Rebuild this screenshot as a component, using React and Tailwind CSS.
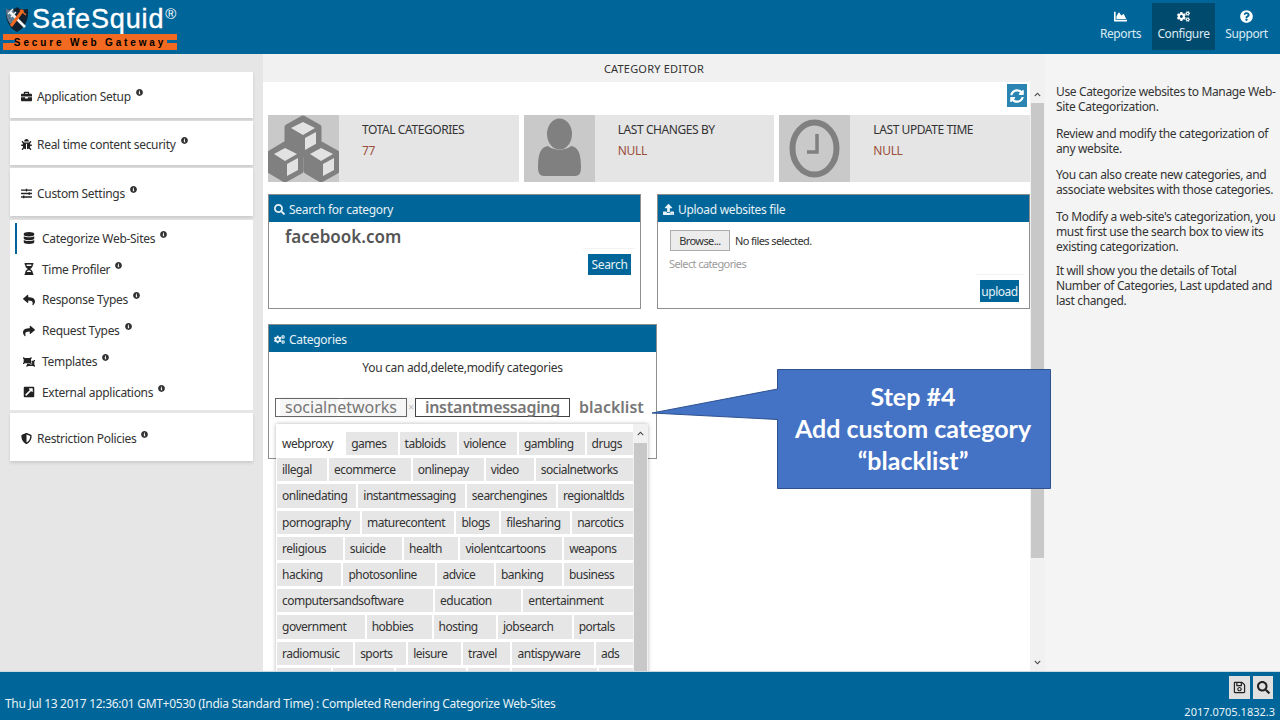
import React from 'react';
import {
  FaBriefcase, FaBug, FaSlidersH, FaDatabase, FaHourglassHalf, FaReply, FaShare, FaObjectUngroup,
  FaExternalLinkSquareAlt, FaShieldAlt, FaInfoCircle, FaCogs, FaQuestionCircle, FaChartArea, FaSyncAlt,
  FaUpload, FaSearch, FaRegSave, FaChevronUp, FaChevronDown,
} from 'react-icons/fa';

const tagRows = [
  ['webproxy', 'games', 'tabloids', 'violence', 'gambling', 'drugs'],
  ['illegal', 'ecommerce', 'onlinepay', 'video', 'socialnetworks'],
  ['onlinedating', 'instantmessaging', 'searchengines', 'regionaltlds'],
  ['pornography', 'maturecontent', 'blogs', 'filesharing', 'narcotics'],
  ['religious', 'suicide', 'health', 'violentcartoons', 'weapons'],
  ['hacking', 'photosonline', 'advice', 'banking', 'business'],
  ['computersandsoftware', 'education', 'entertainment'],
  ['government', 'hobbies', 'hosting', 'jobsearch', 'portals'],
  ['radiomusic', 'sports', 'leisure', 'travel', 'antispyware', 'ads'],
];

// bottom row is cut by the status bar, only the box tops show
const clippedTags = [54, 61, 70, 42, 85, 34];

const subItems = [
  { icon: FaDatabase, label: 'Categorize Web-Sites', active: true },
  { icon: FaHourglassHalf, label: 'Time Profiler' },
  { icon: FaReply, label: 'Response Types' },
  { icon: FaShare, label: 'Request Types' },
  { icon: FaObjectUngroup, label: 'Templates' },
  { icon: FaExternalLinkSquareAlt, label: 'External applications' },
];

const Info = () => <FaInfoCircle className="text-[7px] text-[#333] mb-2 ml-[5px]" />;

const SideCard = ({ icon: Icon, label, className }) => (
  <div className={`bg-white flex items-center pl-[11px] pt-[2px] text-[#333] shadow-[0_2px_3px_rgba(0,0,0,0.12)] ${className}`}>
    <Icon className="text-[11px] w-[11px] mr-[5px] text-[#222]" />
    <span>{label}</span>
    <Info />
  </div>
);

const Panel = ({ icon: Icon, title, className, children }) => (
  <div className={`border border-[#8e8e8e] bg-white ${className}`}>
    <div className="h-[27px] pt-[1px] bg-[#006699] text-[#e8f2f7] flex items-center pl-[5px] gap-[4px]">
      <Icon className="text-[11px]" />
      <span>{title}</span>
    </div>
    {children}
  </div>
);

const Stat = ({ icon, title, value }) => (
  <div className="flex-1 h-[67px] bg-[#e5e5e5] flex">
    <div className="w-[71px] bg-[#c9c9c9] flex items-center justify-center overflow-hidden shrink-0">{icon}</div>
    <div className="pl-[23px] pt-[7px]">
      <div className="text-[#333] leading-[16px] tracking-[-0.42px]">{title}</div>
      <div className="text-[#9a4f3a] leading-[16px] mt-[5px]">{value}</div>
    </div>
  </div>
);

const Cubes = () => (
  <svg width="71" height="67" viewBox="0 0 71 67" fill="none" stroke="#808080" strokeWidth="5" strokeLinejoin="round">
    <path d="M35 3 L51 12 V31 L35 40 L19 31 V12 Z" fill="#808080" />
    <path d="M35 7 L47 13 L35 20 L23 13 Z" fill="#e2e2e2" stroke="none" />
    <path d="M37 23 L48 17 V29 L37 35 Z" fill="#e2e2e2" stroke="none" />
    <path d="M17 29 L33 38 V56 L17 65 L2 56 V38 Z" fill="#808080" />
    <path d="M17 33 L29 39 L17 46 L6 39 Z" fill="#e2e2e2" stroke="none" />
    <path d="M19 49 L30 43 V55 L19 61 Z" fill="#e2e2e2" stroke="none" />
    <path d="M53 29 L69 38 V56 L53 65 L38 56 V38 Z" fill="#808080" />
    <path d="M53 33 L65 39 L53 46 L42 39 Z" fill="#e2e2e2" stroke="none" />
    <path d="M55 49 L66 43 V55 L55 61 Z" fill="#e2e2e2" stroke="none" />
  </svg>
);

const Person = () => (
  <svg width="71" height="67" viewBox="0 0 71 67">
    <ellipse cx="35.5" cy="19" rx="12.5" ry="15.5" fill="#808080" />
    <path d="M14 53 C14 40 16 32 24 31 C30 36 41 36 47 31 C55 32 57 40 57 53 C57 58 55 61 51 61 H20 C16 61 14 58 14 53 Z" fill="#808080" />
  </svg>
);

const Clock = () => (
  <svg width="71" height="67" viewBox="0 0 71 67" fill="none" stroke="#808080">
    <ellipse cx="35.5" cy="33.5" rx="22" ry="26" strokeWidth="6" />
    <path d="M38 19 V37 H28" strokeWidth="3.5" />
  </svg>
);

const Logo = () => (
  <div className="w-[178px] pt-[4px] pl-[3px]">
    <div className="flex items-start h-[30px]">
      <svg width="24" height="27" viewBox="0 0 24 27" className="shrink-0 mt-[2px] ml-[2px]">
        <path d="M1 3 C8 4 10 3 12 1 C14 3 17 4 23 3 C24 13 20 22 12 26 C4 22 0 13 1 3 Z" fill="#10202e" />
        <path d="M1 3 C4 4 6 4 8 3 L12 13 L5 18 C2 14 1 9 1 3 Z" fill="#5d7a92" />
        <path d="M5 6 L20 21" stroke="#f3f3f3" strokeWidth="2.6" />
        <path d="M3 8 L8 3 M6 11 L11 6" stroke="#f3f3f3" strokeWidth="1.4" />
        <path d="M18 4 L6 20" stroke="#f26a21" strokeWidth="3" />
        <path d="M15 4 L21 9" stroke="#f26a21" strokeWidth="1.6" />
      </svg>
      <span className="text-white text-[27px] leading-[27px] tracking-[0.85px] ml-[3px] mt-[2px] font-['Liberation_Sans',sans-serif] [-webkit-text-stroke:0.4px_white]">SafeSquid</span>
      <span className="text-white text-[15px] leading-[15px] mt-[2px] ml-[1px] font-['Liberation_Sans',sans-serif]">®</span>
    </div>
    <div className="h-[16px] w-[174px] bg-[#f26a21] flex items-center justify-center relative">
      <span className="absolute left-0 top-[6px] w-[12px] h-[3px] bg-[#006699]" />
      <span className="absolute right-0 top-[6px] w-[10px] h-[3px] bg-[#006699]" />
      <span className="text-black text-[10px] font-bold tracking-[2.85px] font-['Liberation_Sans',sans-serif]">Secure Web Gateway</span>
    </div>
  </div>
);

const NavBtn = ({ icon: Icon, label, active }) => (
  <div className={active
    ? 'h-[47px] w-[63px] pb-[2px] bg-[#004a6e] text-[#dcebf3] tracking-[-0.4px] flex flex-col items-center justify-center gap-[3px]'
    : 'h-[47px] w-[63px] pb-[2px] text-[#dcebf3] tracking-[-0.4px] flex flex-col items-center justify-center gap-[3px]'}>
    <Icon className="text-[13px] text-white" />
    <span>{label}</span>
  </div>
);

export default function App() {
  return (
    <div className="w-[1280px] h-[720px] overflow-hidden flex flex-col text-[12px] leading-[15px] tracking-[-0.3px] font-['Noto_Sans',sans-serif] relative">
      {/* top bar */}
      <header className="h-[54px] shrink-0 bg-[#006699] flex justify-between">
        <Logo />
        <div className="flex pt-[3px] pr-[2px]">
          <NavBtn icon={FaChartArea} label="Reports" />
          <NavBtn icon={FaCogs} label="Configure" active />
          <NavBtn icon={FaQuestionCircle} label="Support" />
        </div>
      </header>

      <div className="flex-1 flex min-h-0">
        {/* left menu */}
        <aside className="w-[263px] shrink-0 bg-[#e6e6e6] pl-[10px] pr-[10px] pt-[18px]">
          <SideCard icon={FaBriefcase} label="Application Setup" className="h-[46px] mb-[3px]" />
          <SideCard icon={FaBug} label="Real time content security" className="h-[44px] mb-[3px]" />
          <SideCard icon={FaSlidersH} label="Custom Settings" className="h-[48px] mb-[4px]" />
          <div className="bg-white h-[190px] pt-[3px] mb-[3px] pl-[5px]">
            {subItems.map(({ icon: Icon, label, active }) => (
              <div key={label} className={active
                ? 'h-[30.8px] flex items-center border-l-2 border-[#006699] pl-[6px] text-[#333]'
                : 'h-[30.8px] flex items-center border-l-2 border-transparent pl-[6px] text-[#333]'}>
                <Icon className="text-[12px] w-[12px] text-[#222] mr-[7px]" />
                <span>{label}</span>
                <Info />
              </div>
            ))}
          </div>
          <SideCard icon={FaShieldAlt} label="Restriction Policies" className="h-[48px]" />
        </aside>

        {/* editor */}
        <main className="w-[782px] shrink-0 flex flex-col min-h-0">
          <div className="h-[28px] shrink-0 bg-[#f1f1f1] flex items-center justify-center text-[#333] text-[11px] tracking-[0.2px]">CATEGORY EDITOR</div>
          <div className="flex-1 flex min-h-0">
            <div className="w-[767px] bg-white pl-[5px] overflow-hidden relative">
              <div className="flex justify-end h-[33px] pt-[2px] pr-[3px]">
                <div className="w-[20px] h-[23px] bg-[#2a85b3] flex items-center justify-center text-white text-[14px]"><FaSyncAlt /></div>
              </div>
              <div className="flex gap-[5px]">
                <Stat icon={<Cubes />} title="TOTAL CATEGORIES" value="77" />
                <Stat icon={<Person />} title="LAST CHANGES BY" value="NULL" />
                <Stat icon={<Clock />} title="LAST UPDATE TIME" value="NULL" />
              </div>
              <div className="flex mt-[12px]">
                <Panel icon={FaSearch} title="Search for category" className="w-[373px] h-[115px]">
                  <div className="pl-[16px] pt-[4px] text-[17px] leading-[22px] font-semibold text-[#555] tracking-normal">facebook.com</div>
                  <div className="ml-auto w-[52px] mr-[5px] border-t border-[#f3f3f3] pt-[5px] pr-[4px] flex justify-end">
                    <button className="w-[43px] h-[21px] bg-[#006699] text-[#e8f2f7]">Search</button>
                  </div>
                </Panel>
                <Panel icon={FaUpload} title="Upload websites file" className="w-[373px] h-[115px] ml-[16px]">
                  <div className="pl-[12px] pt-[8px] flex items-center gap-[5px] text-[#333] text-[11px] tracking-[-0.6px]">
                    <span className="w-[60px] h-[21px] bg-[#ececec] border border-[#adadad] flex items-center justify-center">Browse...</span>
                    <span>No files selected.</span>
                  </div>
                  <div className="pl-[11px] mt-[5px] text-[#9b9b9b] text-[11px] tracking-[-0.6px]">Select categories</div>
                  <div className="ml-auto w-[48px] mr-[5px] mt-[3px] border-t border-[#f3f3f3] pt-[5px] pr-[5px] flex justify-end">
                    <button className="w-[39px] h-[22px] bg-[#006699] text-[#e8f2f7] tracking-[-0.5px]">upload</button>
                  </div>
                </Panel>
              </div>
              <Panel icon={FaCogs} title="Categories" className="w-[389px] h-[135px] mt-[15px]">
                <div className="text-center text-[#333] pt-[8px]">You can add,delete,modify categories</div>
                <div className="flex items-center mt-[23px] ml-[6px] text-[16px] leading-[19px] text-[#777] tracking-normal relative">
                  <span className="absolute left-[5px] top-[-1px] w-[58px] h-[21px] rounded-[3px] bg-[#f6f6f6]" />
                  <span className="absolute left-[68px] top-[-1px] w-[75px] h-[21px] rounded-[3px] bg-[#f6f6f6]" />
                  <span className="w-[132px] h-[19px] border border-[#666] text-center leading-[17px] relative">socialnetworks</span>
                  <span className="w-[8px] text-[10px] text-center text-[#bbb] relative">×</span>
                  <span className="w-[155px] h-[19px] border border-[#444] text-center leading-[17px] font-semibold tracking-[-0.3px] bg-white relative">instantmessaging</span>
                  <span className="ml-[9px] font-semibold">blacklist</span>
                </div>
              </Panel>

              {/* category dropdown */}
              <div className="absolute left-[13px] top-[342px] w-[372px] h-[260px] bg-white shadow-[0_0_4px_rgba(0,0,0,0.3)] flex overflow-hidden">
                <div className="w-[357px] pl-[1px] pt-[8px] flex flex-col gap-[3px] tracking-[-0.5px]">
                  {tagRows.map((row, i) => (
                    <div key={i} className="flex gap-[2px] h-[23.2px] shrink-0">
                      {row.map((tag, j) => (
                        <span key={tag + j} className={i === 0 && j === 0
                          ? 'grow px-[5px] flex items-center bg-white text-[#333]'
                          : 'grow px-[5px] flex items-center bg-[#e6e6e6] text-[#333]'}>{tag}</span>
                      ))}
                    </div>
                  ))}
                  <div className="flex gap-[2px] h-[23.2px] shrink-0">
                    {clippedTags.map((w, i) => (
                      <span key={i} className="grow bg-[#e6e6e6]" style={{ width: w }} />
                    ))}
                  </div>
                </div>
                <div className="w-[15px] bg-[#f1f1f1] flex flex-col items-center">
                  <FaChevronUp className="text-[7px] text-[#444] my-[6px]" />
                  <div className="w-[13px] flex-1 bg-[#c8c8c8]" />
                </div>
              </div>
            </div>

            {/* page scrollbar */}
            <div className="w-[15px] shrink-0 bg-[#f1f1f1] flex flex-col items-center pb-[5px]">
              <FaChevronUp className="text-[7px] text-[#444] mt-[9px] mb-[5px]" />
              <div className="w-[13px] h-[455px] bg-[#c8c8c8]" />
              <FaChevronDown className="text-[7px] text-[#444] mt-auto" />
            </div>
          </div>
        </main>

        {/* help */}
        <aside className="flex-1 bg-[#f4f4f4] pl-[11px] pt-[30px] text-[#333] flex flex-col gap-[11.5px] whitespace-nowrap tracking-[-0.36px]">
          <p>Use Categorize websites to Manage Web-<br />Site Categorization.</p>
          <p>Review and modify the categorization of<br />any website.</p>
          <p>You can also create new categories, and<br />associate websites with those categories.</p>
          <p>To Modify a web-site's categorization, you<br />must first use the search box to view its<br />existing categorization.</p>
          <p className="-mt-[2px]">It will show you the details of Total<br />Number of Categories, Last updated and<br />last changed.</p>
        </aside>
      </div>

      {/* status bar */}
      <footer className="h-[49px] shrink-0 bg-[#006699] border-t border-[#c9d9e2] flex justify-between text-[#e8f2f7]">
        <div className="self-end pb-[9px] pl-[5px]">Thu Jul 13 2017 12:36:01 GMT+0530 (India Standard Time) : Completed Rendering Categorize Web-Sites</div>
        <div className="flex flex-col items-end pr-[5px] pt-[4px]">
          <div className="flex gap-[3px] text-[#222] pr-[2px]">
            <span className="w-[21px] h-[23px] bg-[#e0e0e0] flex items-center justify-center text-[13px]"><FaRegSave /></span>
            <span className="w-[20px] h-[23px] bg-[#e0e0e0] flex items-center justify-center text-[13px]"><FaSearch /></span>
          </div>
          <div className="mt-[5px] text-[11px] tracking-normal">2017.0705.1832.3</div>
        </div>
      </footer>

      {/* tutorial callout */}
      <svg width="410" height="130" viewBox="0 0 410 130" className="absolute left-[650px] top-[365px]">
        <path d="M127.5 4.5 H400.5 V123.5 H127.5 V54.5 L2 48 L127.5 24 Z" fill="#4472c4" stroke="#2f528f" />
      </svg>
      <div className="absolute left-[777px] top-[380px] w-[272px] text-center text-white text-[25px] leading-[32px] tracking-normal font-bold font-['Lato',sans-serif]">
        Step #4<br />Add custom category<br />“blacklist”
      </div>
    </div>
  );
}
